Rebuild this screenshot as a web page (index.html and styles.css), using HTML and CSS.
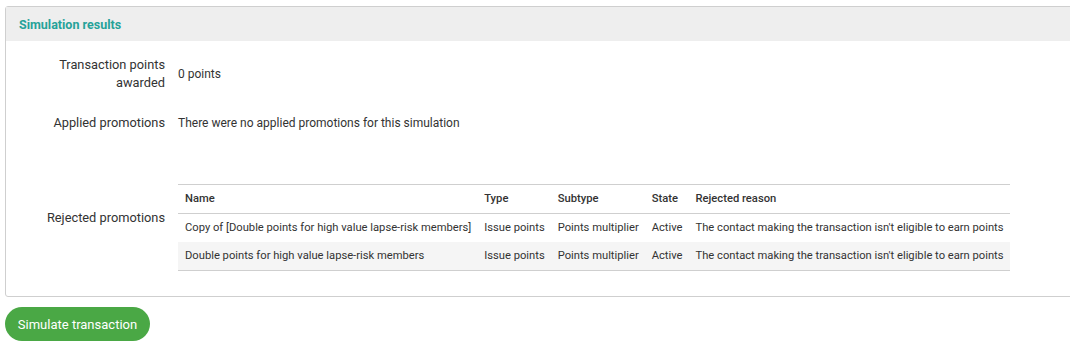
FILE: index.html
```html
<!DOCTYPE html>
<html lang="en">
<head>
    <meta charset="UTF-8">
    <title>Simulation results</title>
    <link rel="stylesheet" href="styles.css">
</head>
<body>
    <div class="panel">
        <div class="panel-head">Simulation results</div>
        <div class="panel-body">
            <div class="row row-points">
                <div class="label">Transaction points<br>awarded</div>
                <div class="value">0 points</div>
            </div>
            <div class="row row-applied">
                <div class="label">Applied promotions</div>
                <div class="value">There were no applied promotions for this simulation</div>
            </div>
            <div class="row row-rejected">
                <div class="label">Rejected promotions</div>
                <div class="value">
                    <table class="promos">
                        <thead>
                            <tr>
                                <th>Name</th>
                                <th>Type</th>
                                <th>Subtype</th>
                                <th>State</th>
                                <th>Rejected reason</th>
                            </tr>
                        </thead>
                        <tbody>
                            <tr>
                                <td>Copy of [Double points for high value lapse-risk members]</td>
                                <td>Issue points</td>
                                <td>Points multiplier</td>
                                <td>Active</td>
                                <td>The contact making the transaction isn't eligible to earn points</td>
                            </tr>
                            <tr>
                                <td>Double points for high value lapse-risk members</td>
                                <td>Issue points</td>
                                <td>Points multiplier</td>
                                <td>Active</td>
                                <td>The contact making the transaction isn't eligible to earn points</td>
                            </tr>
                        </tbody>
                    </table>
                </div>
            </div>
        </div>
    </div>
    <button class="btn-simulate" type="button">Simulate transaction</button>
</body>
</html>
```

FILE: styles.css
```css
body {
    margin: 0;
    padding: 6px 0 0 5px;
    font-family: Roboto, "Liberation Sans", Arial, sans-serif;
    color: #333;
    background: #fff;
    overflow: hidden;
}
.panel {
    border: 1px solid #cfcfcf;
    border-radius: 3px 0 0 3px;
    margin-right: -20px;
}
.panel-head {
    height: 34px;
    line-height: 36px;
    padding-left: 13px;
    background: #eeeeee;
    color: #26a299;
    font-size: 12.5px;
    font-weight: bold;
}
.panel-body {
    padding: 15px 0 25px;
}
.row {
    display: flex;
    align-items: center;
}
.label {
    width: 159px;
    flex-shrink: 0;
    text-align: right;
    font-size: 12.8px;
    line-height: 18px;
}
.value {
    margin-left: 13px;
    font-size: 12px;
    line-height: 18px;
}
.row-applied {
    margin-top: 22px;
}
.row-rejected {
    margin-top: 32px;
}
.row-rejected .value {
    padding-top: 20px;
}
.promos {
    border-collapse: collapse;
    border-top: 1px solid #cfcfcf;
    border-bottom: 1px solid #cfcfcf;
    font-size: 11.2px;
}
.promos th {
    text-align: left;
    font-weight: 500;
    height: 28px;
    padding: 0 7px;
    border-bottom: 1px solid #cfcfcf;
}
.promos td {
    height: 28px;
    padding: 0 6px 0 7px;
    white-space: nowrap;
}
.promos tbody tr:nth-child(2) td {
    background: #f5f5f5;
}
.btn-simulate {
    margin-top: 10px;
    width: 145px;
    height: 34px;
    border: none;
    border-radius: 17px;
    background: #4aa845;
    color: #fff;
    font-family: Roboto, "Liberation Sans", Arial, sans-serif;
    font-size: 13px;
    cursor: pointer;
}
```
